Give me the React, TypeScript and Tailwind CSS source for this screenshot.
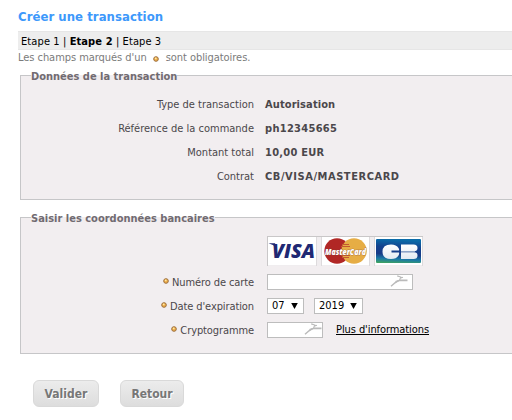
import type { ReactNode } from 'react';

const details = [
  { label: 'Type de transaction', value: 'Autorisation', tracking: 'tracking-[0.1px]' },
  { label: 'Référence de la commande', value: 'ph12345665', tracking: 'tracking-[0.3px]' },
  { label: 'Montant total', value: '10,00 EUR', tracking: 'tracking-[0.25px]' },
  { label: 'Contrat', value: 'CB/VISA/MASTERCARD', tracking: 'tracking-[0.55px]' },
];

function Dot() {
  return (
    <svg width="6" height="6" viewBox="0 0 6 6" className="shrink-0">
      <circle cx="3" cy="3" r="2.3" fill="#f3b24c" stroke="#9a6c3c" strokeWidth="1" />
      <circle cx="2.7" cy="2.3" r="0.9" fill="#ffe9a6" />
    </svg>
  );
}

function Row({ label, required, children }: { label: string; required?: boolean; children: ReactNode }) {
  return (
    <div className="flex h-6 items-center">
      <div className="flex w-[233px] shrink-0 items-center justify-end gap-[3px] pt-[2px]">
        {required && <span className="-mt-[4px] flex"><Dot /></span>}
        <span className={required ? 'tracking-[-0.1px]' : ''}>{label}</span>
      </div>
      {children}
    </div>
  );
}

function Section({ title, className, children }: { title: string; className: string; children: ReactNode }) {
  return (
    <fieldset className={`ml-5 w-[520px] border border-[#c6c6c8] bg-[#f2eef0] pl-[10px] ${className}`}>
      <legend className="h-[15px] text-[11px] leading-[17px] font-bold text-[#716b71]">{title}</legend>
      {children}
    </fieldset>
  );
}

function Swallow() {
  return (
    <svg width="18" height="12" viewBox="0 0 18 12" fill="none" stroke="#bababa">
      <path d="M1 11.2 L5 7.8 L8.5 5.7" strokeWidth="1.5" />
      <path d="M5.5 6.8 L10 5.3 L17.5 5.4" strokeWidth="1.6" />
      <path d="M7.2 0.9 L10.8 2 L9.6 5 M10 3.2 L13 2.2" strokeWidth="1.1" />
    </svg>
  );
}

function Select({ value, className }: { value: string; className: string }) {
  return (
    <button className={`flex h-4 items-center justify-between border border-[#bdbdbd] bg-white pr-[5px] pl-1 text-[11px] leading-[14px] text-black ${className}`}>
      <span>{value}</span>
      <svg width="7" height="6" viewBox="0 0 7 6"><path d="M0.2 0 H6.8 L3.5 6 Z" fill="#000" /></svg>
    </button>
  );
}

function Cards() {
  return (
    <svg width="156" height="30" viewBox="0 0 156 30">
      <defs>
        <linearGradient id="cbBase" x1="0.1" y1="0" x2="0" y2="1">
          <stop offset="0" stopColor="#0b6ba8" />
          <stop offset="0.3" stopColor="#14428e" />
          <stop offset="0.6" stopColor="#173b88" />
          <stop offset="0.8" stopColor="#1b7aa6" />
          <stop offset="1" stopColor="#43a75a" />
        </linearGradient>
        <linearGradient id="shine" x1="0" y1="0" x2="0" y2="1">
          <stop offset="0" stopColor="#ffffff" />
          <stop offset="1" stopColor="#e4ebf2" />
        </linearGradient>
      </defs>
      <rect width="156" height="30" fill="#f0edef" />
      <path d="M0 .5 H156 M.5 0 V30" stroke="#c9c7c8" />
      <path d="M49.5 1 V30 M54.5 1 V30 M102.5 1 V30 M107.5 1 V30 M155.5 1 V30" stroke="#dddadc" />
      <rect x="1" y="1" width="48" height="28" fill="#fff" />
      <rect x="55" y="1" width="47" height="28" fill="#fff" />
      <rect x="108" y="1" width="47" height="28" fill="#fff" />
      <text x="5" y="21.5" textLength="43" lengthAdjust="spacingAndGlyphs" fontFamily="Open Sans, sans-serif" fontSize="19.5" fontWeight="800" fontStyle="italic" fill="#202873">VISA</text>
      <path d="M1.5 7.2 H8 L10 12 Q6 8.2 1.5 7.2 Z" fill="#202873" />
      <circle cx="70" cy="15" r="12.7" fill="#b12725" />
      <circle cx="87" cy="15" r="12.7" fill="#e6ad45" />
      <path d="M75 8.5 H82 M74 10.5 H83 M74 19.5 H83 M75 21.5 H82" stroke="#c25a30" />
      <text x="58" y="18.5" textLength="41" lengthAdjust="spacingAndGlyphs" fontFamily="Open Sans, sans-serif" fontSize="9" fontWeight="800" fontStyle="italic" fill="#fff" stroke="#75413b" strokeWidth=".5" paintOrder="stroke">MasterCard</text>
      <rect x="109" y="3" width="45" height="24" rx="1" fill="url(#cbBase)" />
      <path d="M124 8.5 Q129.5 8.5 131.5 12 Q132.5 13.5 132 14.5 H124.5 V16.5 H132 Q132.5 18 131.5 19.5 Q129.5 23 124 23 Q115.5 23 115.5 15.8 Q115.5 8.5 124 8.5 Z" fill="url(#shine)" />
      <path d="M134 8.5 H146.5 Q150.5 8.5 150.5 12 Q150.5 15.2 147 15.2 H134 Z M134 16.2 H147 Q150.5 16.2 150.5 19.5 Q150.5 23 146.5 23 H134 Z" fill="url(#shine)" />
      <path d="M134 15.7 H148" stroke="#9eb4d2" />
    </svg>
  );
}

function Button({ children, className }: { children: string; className: string }) {
  return (
    <button className={`h-[27px] rounded-[6px] border border-[#d9d9d9] bg-linear-to-b from-[#ececec] to-[#dddddd] pt-px text-[12px] leading-[24px] font-bold text-[#777] [text-shadow:1px_1px_0_#fff] ${className}`}>
      {children}
    </button>
  );
}

export default function App() {
  return (
    <div className="h-[420px] w-[512px] overflow-hidden bg-white font-['DejaVu_Sans_Condensed','DejaVu_Sans',sans-serif] text-[11px] leading-[14px] whitespace-nowrap text-[#4b474b]">
      <h1 className="ml-[18px] h-[31px] pt-2 text-[13px] leading-[17px] font-bold tracking-[0.05px] text-[#3d98fb]">Créer une transaction</h1>
      <nav className="ml-[18px] h-[19px] border-y border-[#e6e6e6] bg-[#ededed] pl-[3px] leading-[19px] tracking-[0.1px] text-black">
        Etape 1 | <b>Etape 2</b> | Etape 3
      </nav>
      <p className="ml-[18px] flex h-[18px] items-center pb-[2px] tracking-[-0.05px] text-[#7b7b7b]">
        <span>Les champs marqués d'un</span>
        <span className="mt-px mr-[7px] ml-[6px] flex"><Dot /></span>
        <span>sont obligatoires.</span>
      </p>

      <Section title="Données de la transaction" className="h-[132px]">
        <div className="-ml-[10px] pt-[9px]">
          {details.map((d) => (
            <Row key={d.label} label={d.label}>
              <b className={`ml-[11px] pt-[2px] ${d.tracking}`}>{d.value}</b>
            </Row>
          ))}
        </div>
      </Section>

      <Section title="Saisir les coordonnées bancaires" className="mt-[10px] h-[144px]">
        <div className="-ml-[10px] pt-[11px]">
          <div className="ml-[246px] h-[34px]"><Cards /></div>
          <Row label="Numéro de carte" required>
            <div className="ml-[13px] flex h-4 w-[146px] justify-end border border-[#bdbdbd] bg-white pr-1"><Swallow /></div>
          </Row>
          <Row label="Date d'expiration" required>
            <Select value="07" className="ml-[13px] w-[37px]" />
            <Select value="2019" className="ml-[10px] w-[49px]" />
          </Row>
          <Row label="Cryptogramme" required>
            <div className="ml-[13px] flex h-4 w-[56px] justify-end border border-[#bdbdbd] bg-white"><Swallow /></div>
            <a className="ml-[13px] tracking-[-0.08px] text-black underline">Plus d'informations</a>
          </Row>
        </div>
      </Section>

      <div className="mt-[26px] ml-[33px] flex gap-[21px]">
        <Button className="w-[66px]">Valider</Button>
        <Button className="w-[64px]">Retour</Button>
      </div>
    </div>
  );
}
